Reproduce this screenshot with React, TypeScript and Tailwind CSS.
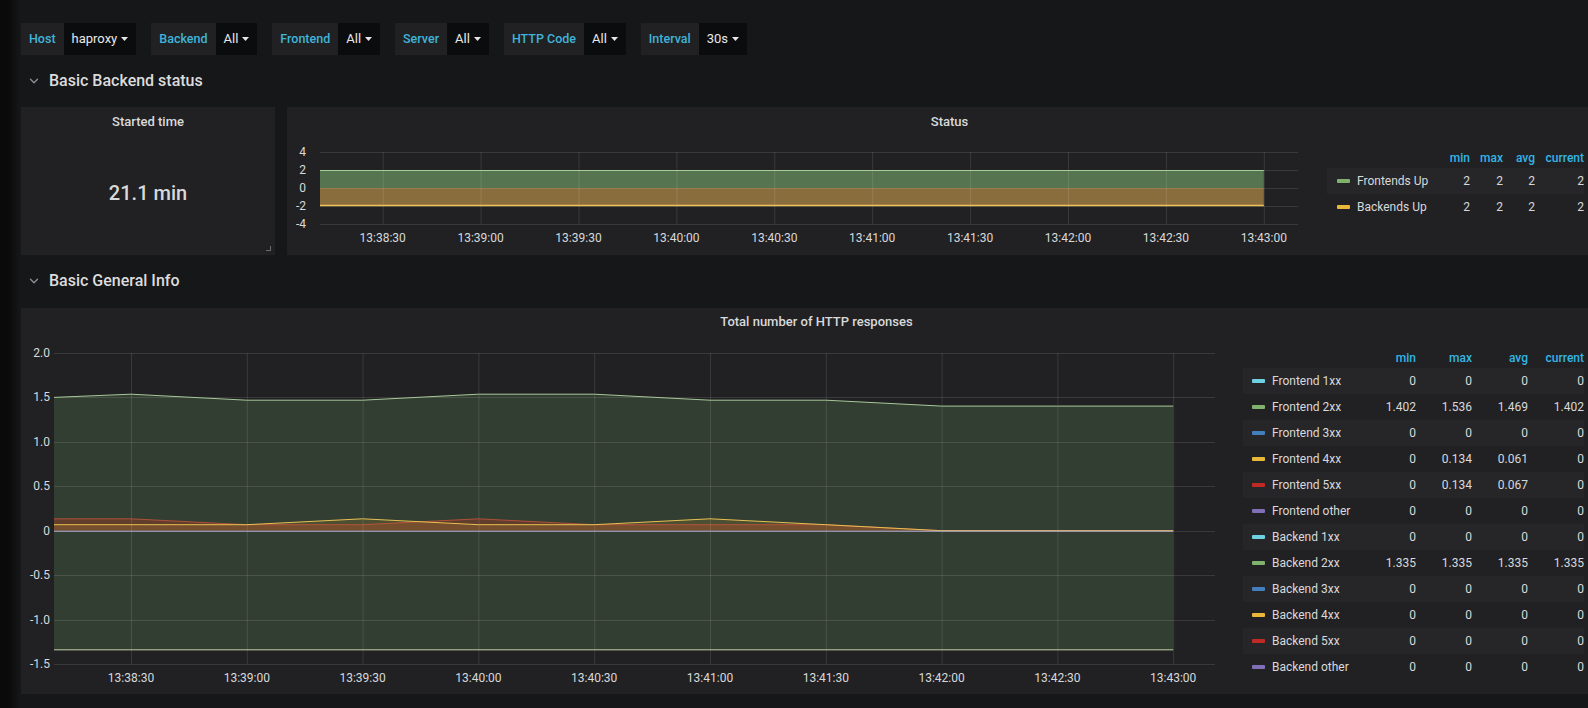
import { ChevronDown } from "lucide-react";

const TIMES = [
  "13:38:30",
  "13:39:00",
  "13:39:30",
  "13:40:00",
  "13:40:30",
  "13:41:00",
  "13:41:30",
  "13:42:00",
  "13:42:30",
  "13:43:00",
];

const GRID = "rgba(255,255,255,0.11)";
const LABEL = "#d8d9da";

function Caret() {
  return (
    <svg width="7" height="4" viewBox="0 0 7 4" className="block">
      <polygon points="0,0 7,0 3.5,4" fill="#e6e6e6" />
    </svg>
  );
}

function VarPill({ label, value }: { label: string; value: string }) {
  return (
    <div className="flex h-[32px] items-stretch">
      <div className="flex items-center bg-[#212124] px-[8px] text-[12.5px] font-medium text-[#3fb4d8]">{label}</div>
      <div className="flex items-center gap-[4px] bg-[#0b0c0e] px-[8px] text-[13px] text-[#e8e8e8]">
        <span>{value}</span>
        <Caret />
      </div>
    </div>
  );
}

function RowTitle({ title }: { title: string }) {
  return (
    <div className="flex h-[26px] items-center gap-[8px] pl-[6px]">
      <ChevronDown size={14} strokeWidth={2.2} className="text-[#8f9195]" />
      <span className="text-[16px] font-medium text-[#dcdcdd]">{title}</span>
    </div>
  );
}

function StatusGraph() {
  const W = 1011;
  const H = 119;
  const x0 = 33;
  const xs = TIMES.map((_, i) => 95.7 + i * 97.9);
  const end = xs[xs.length - 1];
  const ticks: [string, number][] = [
    ["4", 16],
    ["2", 34],
    ["0", 52],
    ["-2", 70],
    ["-4", 88],
  ];
  return (
    <svg width={W} height={H} className="block shrink-0">
      <rect x={x0} y={34} width={end - x0} height={18} fill="#56744f" />
      <rect x={x0} y={52} width={end - x0} height={18} fill="#8a6d3c" />
      {ticks.map(([, y]) => (
        <line key={y} x1={x0} x2={W} y1={y + 0.5} y2={y + 0.5} stroke={GRID} />
      ))}
      {xs.map((x) => (
        <line key={x} x1={x + 0.5} x2={x + 0.5} y1={16} y2={88} stroke={GRID} />
      ))}
      <line x1={x0} x2={end} y1={34.5} y2={34.5} stroke="#a8cf98" />
      <line x1={x0} x2={end} y1={69.5} y2={69.5} stroke="#efc25a" strokeWidth={1.5} />
      {ticks.map(([t, y]) => (
        <text key={t} x={19} y={y + 4} textAnchor="end" fontSize={12} fill={LABEL}>
          {t}
        </text>
      ))}
      {xs.map((x, i) => (
        <text key={i} x={x} y={106} textAnchor="middle" fontSize={12} fill={LABEL}>
          {TIMES[i]}
        </text>
      ))}
    </svg>
  );
}

function HttpGraph() {
  const W = 1194;
  const H = 358;
  const x0 = 33;
  const xs = TIMES.map((_, i) => 110 + i * 115.8);
  const X = [x0, ...xs];
  const end = X[X.length - 1];
  const yv = (v: number) => 194.7 - v * 88.86;

  const fe2 = [1.5, 1.536, 1.469, 1.469, 1.536, 1.536, 1.469, 1.469, 1.402, 1.402, 1.402];
  const fe4 = [0.067, 0.067, 0.067, 0.134, 0.067, 0.067, 0.134, 0.067, 0, 0, 0];
  const fe5 = [0.134, 0.134, 0.067, 0.067, 0.134, 0.067, 0.067, 0.067, 0, 0, 0];
  const be2 = yv(-1.335);

  const line = (vals: number[]) => X.map((x, i) => `${x},${yv(vals[i]).toFixed(1)}`).join(" ");
  const area = (vals: number[]) => `${line(vals)} ${end},${yv(0)} ${x0},${yv(0)}`;

  const ticks: [string, number][] = [
    ["2.0", 2],
    ["1.5", 1.5],
    ["1.0", 1],
    ["0.5", 0.5],
    ["0", 0],
    ["-0.5", -0.5],
    ["-1.0", -1],
    ["-1.5", -1.5],
  ];

  return (
    <svg width={W} height={H} className="block shrink-0">
      <polygon points={`${line(fe2)} ${end},${be2} ${x0},${be2}`} fill="rgba(126,178,109,0.2)" />
      <polygon points={area(fe5)} fill="rgba(196,58,34,0.32)" />
      <polygon points={area(fe4)} fill="rgba(234,184,57,0.14)" />
      {ticks.map(([t, v]) => (
        <line key={t} x1={x0} x2={W} y1={Math.round(yv(v)) + 0.5} y2={Math.round(yv(v)) + 0.5} stroke={GRID} />
      ))}
      {xs.map((x) => (
        <line key={x} x1={x + 0.5} x2={x + 0.5} y1={yv(2)} y2={yv(-1.5)} stroke={GRID} />
      ))}
      <polyline points={line(fe5)} fill="none" stroke="#d9583f" strokeOpacity={0.7} />
      <polyline points={line(fe4)} fill="none" stroke="#e8bf52" />
      <line x1={x0} x2={end} y1={yv(0) + 0.5} y2={yv(0) + 0.5} stroke="#b2aed6" />
      <polyline points={line(fe2)} fill="none" stroke="#a7c898" />
      <line x1={x0} x2={end} y1={be2 + 0.5} y2={be2 + 0.5} stroke="#c9d6a8" />
      {ticks.map(([t, v]) => (
        <text key={t} x={29} y={yv(v) + 4} textAnchor="end" fontSize={12} fill={LABEL}>
          {t}
        </text>
      ))}
      {xs.map((x, i) => (
        <text key={i} x={x} y={346} textAnchor="middle" fontSize={12} fill={LABEL}>
          {TIMES[i]}
        </text>
      ))}
    </svg>
  );
}

type Row = { name: string; color: string; v: string[] };

function Legend({ rows, cols, width, swatchGap }: { rows: Row[]; cols: string[]; width: string; swatchGap: string }) {
  const heads = ["min", "max", "avg", "current"];
  return (
    <div className={`${width} shrink-0 text-[12px]`}>
      <div className="mt-[12px] flex h-[20px] items-center font-medium text-[#33b5e5]">
        <div className="flex-1" />
        {heads.map((h, i) => (
          <div key={h} className={`${cols[i]} text-right`}>
            {h}
          </div>
        ))}
      </div>
      {rows.map((r, idx) => (
        <div
          key={r.name}
          className={`flex h-[26px] items-center text-[#d8d9da] ${idx % 2 === 0 ? "bg-[#262629]" : ""}`}
        >
          <div className={`flex flex-1 items-center ${swatchGap}`}>
            <span className="h-[4px] w-[13px] rounded-[1px]" style={{ backgroundColor: r.color }} />
            <span>{r.name}</span>
          </div>
          {r.v.map((v, i) => (
            <div key={i} className={`${cols[i]} text-right`}>
              {v}
            </div>
          ))}
        </div>
      ))}
    </div>
  );
}

const statusRows: Row[] = [
  { name: "Frontends Up", color: "#7eb26d", v: ["2", "2", "2", "2"] },
  { name: "Backends Up", color: "#eab839", v: ["2", "2", "2", "2"] },
];

const C = {
  c1: "#6ed0e0",
  c2: "#7eb26d",
  c3: "#447ebc",
  c4: "#eab839",
  c5: "#bf2b24",
  c6: "#806eb7",
};

const httpRows: Row[] = [
  { name: "Frontend 1xx", color: C.c1, v: ["0", "0", "0", "0"] },
  { name: "Frontend 2xx", color: C.c2, v: ["1.402", "1.536", "1.469", "1.402"] },
  { name: "Frontend 3xx", color: C.c3, v: ["0", "0", "0", "0"] },
  { name: "Frontend 4xx", color: C.c4, v: ["0", "0.134", "0.061", "0"] },
  { name: "Frontend 5xx", color: C.c5, v: ["0", "0.134", "0.067", "0"] },
  { name: "Frontend other", color: C.c6, v: ["0", "0", "0", "0"] },
  { name: "Backend 1xx", color: C.c1, v: ["0", "0", "0", "0"] },
  { name: "Backend 2xx", color: C.c2, v: ["1.335", "1.335", "1.335", "1.335"] },
  { name: "Backend 3xx", color: C.c3, v: ["0", "0", "0", "0"] },
  { name: "Backend 4xx", color: C.c4, v: ["0", "0", "0", "0"] },
  { name: "Backend 5xx", color: C.c5, v: ["0", "0", "0", "0"] },
  { name: "Backend other", color: C.c6, v: ["0", "0", "0", "0"] },
];

export default function App() {
  return (
    <div className="flex h-[708px] w-[1588px] overflow-hidden bg-[#161719] font-[Roboto,sans-serif] text-[#d8d9da]">
      <div className="w-[20px] shrink-0 bg-gradient-to-r from-[#0a0a0b] from-40% to-[#161719]" />
      <div className="w-[1592px] shrink-0 pl-px">
        {/* template variables */}
        <div className="mt-[23px] flex gap-[15px]">
          <VarPill label="Host" value="haproxy" />
          <VarPill label="Backend" value="All" />
          <VarPill label="Frontend" value="All" />
          <VarPill label="Server" value="All" />
          <VarPill label="HTTP Code" value="All" />
          <VarPill label="Interval" value="30s" />
        </div>

        <div className="mt-[13px]">
          <RowTitle title="Basic Backend status" />
        </div>

        <div className="mt-[13px] flex h-[148px] gap-[12px]">
          <div className="relative flex w-[254px] shrink-0 flex-col bg-[#212124]">
            <div className="flex h-[29px] items-center justify-center text-[13px] font-medium">Started time</div>
            <div className="flex flex-1 items-center justify-center pb-[6px] text-[20px] font-medium">21.1 min</div>
            <div className="absolute bottom-[4px] right-[4px] h-[5px] w-[5px] border-b border-r border-[#6a6a6c]" />
          </div>
          <div className="flex flex-1 flex-col bg-[#212124]">
            <div className="flex h-[29px] items-center justify-center text-[13px] font-medium">Status</div>
            <div className="flex flex-1 gap-[29px] pr-[28px]">
              <StatusGraph />
              <Legend
                rows={statusRows}
                width="w-[257px]"
                cols={["w-[32px]", "w-[33px]", "w-[32px]", "w-[49px]"]}
                swatchGap="gap-[7px] pl-[10px]"
              />
            </div>
          </div>
        </div>

        <div className="mt-[13px]">
          <RowTitle title="Basic General Info" />
        </div>

        <div className="mt-[14px] flex h-[386px] flex-col bg-[#212124]">
          <div className="flex h-[28px] items-center justify-center text-[13px] font-medium">
            Total number of HTTP responses
          </div>
          <div className="flex flex-1 gap-[28px] pr-[28px]">
            <HttpGraph />
            <Legend
              rows={httpRows}
              width="w-[341px]"
              cols={["w-[56px]", "w-[56px]", "w-[56px]", "w-[56px]"]}
              swatchGap="gap-[7px] pl-[9px]"
            />
          </div>
        </div>
      </div>
    </div>
  );
}
